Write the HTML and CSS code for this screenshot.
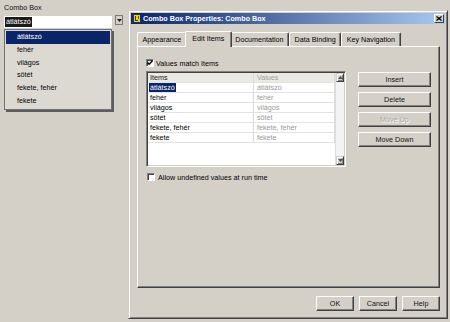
FILE: index.html
```html
<!DOCTYPE html>
<html>
<head>
<meta charset="utf-8">
<link rel="stylesheet" href="styles.css">
</head>
<body>
<div class="desk">
  <div class="left">
    <div class="lbl">Combo Box</div>
    <div class="combo">
      <div class="field"><span class="hl">átlátszó</span></div>
      <div class="dropbtn"><svg width="5" height="3" viewBox="0 0 5 3"><path d="M0 0h5L2.5 3z" fill="#222"/></svg></div>
    </div>
    <ul class="list">
      <li class="on">átlátszó</li>
      <li>fehér</li>
      <li>világos</li>
      <li>sötét</li>
      <li>fekete, fehér</li>
      <li>fekete</li>
    </ul>
  </div>

  <div class="dlg">
    <div class="title">
      <svg class="ticon" width="9" height="9" viewBox="0 0 9 9"><rect width="9" height="9" fill="#1d2f6e"/><rect x="2" y="1" width="6" height="7" fill="#f0d200"/><path d="M3 2h1v4h2v1H3z" fill="#3a3000"/><path d="M6 2h1v3H6z" fill="#6b5a00"/></svg>
      <span class="ttext">Combo Box Properties: Combo Box</span>
      <div class="tclose"><svg width="6" height="5" viewBox="0 0 6 5"><path d="M0.5 0.5L5.5 4.5M5.5 0.5L0.5 4.5" stroke="#000" stroke-width="1.3"/></svg></div>
    </div>
    <div class="dbody">
      <div class="tabs">
        <div class="tab">Appearance</div>
        <div class="tab on">Edit Items</div>
        <div class="tab">Documentation</div>
        <div class="tab">Data Binding</div>
        <div class="tab">Key Navigation</div>
      </div>
      <div class="panel">
        <div class="chkrow">
          <div class="cb"><svg width="6" height="6" viewBox="0 0 6 6"><path d="M0.5 2.5L2.2 4.3L5.5 0.8" stroke="#000" stroke-width="1.3" fill="none"/></svg></div>
          <span>Values match Items</span>
        </div>
        <div class="main">
          <div class="tbl">
            <div class="grid">
              <div class="c h">Items</div><div class="c h v">Values</div>
              <div class="c"><span class="sel">átlátszó</span></div><div class="c v">átlátszó</div>
              <div class="c">fehér</div><div class="c v">fehér</div>
              <div class="c">világos</div><div class="c v">világos</div>
              <div class="c">sötét</div><div class="c v">sötét</div>
              <div class="c">fekete, fehér</div><div class="c v">fekete, fehér</div>
              <div class="c">fekete</div><div class="c v">fekete</div>
            </div>
            <div class="sb">
              <div class="sbb"><svg width="5" height="3" viewBox="0 0 5 3"><path d="M0 3h5L2.5 0z" fill="#555"/></svg></div>
              <div class="sbt"></div>
              <div class="sbb"><svg width="5" height="3" viewBox="0 0 5 3"><path d="M0 0h5L2.5 3z" fill="#555"/></svg></div>
            </div>
          </div>
          <div class="btns">
            <div class="btn">Insert</div>
            <div class="btn">Delete</div>
            <div class="btn dis">Move Up</div>
            <div class="btn">Move Down</div>
          </div>
        </div>
        <div class="chkrow allow">
          <div class="cb"></div>
          <span>Allow undefined values at run time</span>
        </div>
      </div>
      <div class="foot">
        <div class="btn fb">OK</div>
        <div class="btn fb">Cancel</div>
        <div class="btn fb">Help</div>
      </div>
    </div>
  </div>
</div>
</body>
</html>
```

FILE: styles.css
```css
* { box-sizing: border-box; }
body {
  margin: 0;
  width: 450px;
  height: 322px;
  overflow: hidden;
  background: #d4d0c8;
  font-family: "Liberation Sans", Arial, sans-serif;
  font-size: 7.2px;
  color: #000;
}
.desk { display: flex; align-items: flex-start; height: 322px; }

.left { position: relative; width: 124px; padding: 2px 0 0 4px; }
.lbl { height: 12px; line-height: 12px; color: #111; }
.combo { display: flex; align-items: flex-start; margin-top: 2px; }
.field { width: 108px; height: 12px; background: #fff; padding: 1px 0 0 1px; }
.field .hl {
  display: inline-block; background: #1a1a1a; color: #fff;
  height: 10px; line-height: 10px; padding: 0 1px;
}
.dropbtn {
  width: 8px; height: 10px; margin: -1px 0 0 3px;
  background: #d4d0c8; border: 1px solid #7a7a7a;
  display: flex; align-items: center; justify-content: center;
}
.list {
  position: absolute; left: 4px; top: 29px; width: 108px;
  margin: 0; padding: 1px; list-style: none;
  background: #dcd9d3; border: 1px solid #707070;
  box-shadow: 2px 2px 0 #5d5d5d;
}
.list li { height: 12.8px; line-height: 12.8px; padding-left: 11px; color: #000; }
.list li.on { background: #0a246a; color: #fff; }

.dlg {
  margin: 10px 0 0 4px; width: 320px; height: 309px;
  border: 1px solid; border-color: #d4d0c8 #404040 #404040 #d4d0c8;
  box-shadow: inset 1px 1px #fff, inset -1px -1px #808080;
  padding: 2px; display: flex; flex-direction: column;
}
.title {
  height: 11px; display: flex; align-items: center;
  background: linear-gradient(90deg, #0a246a, #a6caf0);
  color: #fff; font-weight: bold; padding-left: 1px;
}
.ticon { margin-right: 2px; flex: none; }
.tclose {
  margin-left: auto; margin-right: 1px; width: 10px; height: 9px;
  background: #d4d0c8; border: 1px solid; border-color: #fff #404040 #404040 #fff;
  display: flex; align-items: center; justify-content: center;
}
.dbody { flex: 1; padding: 8px 5px 0 6px; display: flex; flex-direction: column; }

.tabs { display: flex; height: 14px; align-items: flex-end; }
.tab {
  height: 14px; padding: 0 4.5px; line-height: 13px; white-space: nowrap;
  border-top: 1px solid #fff; border-left: 1px solid #fff; border-right: 1px solid #404040;
  box-shadow: inset -1px 0 #808080; border-radius: 2px 2px 0 0;
}
.tab.on {
  height: 16px; margin: 0 -2px -1px; padding: 0 6.5px; line-height: 14px;
  position: relative; z-index: 1; background: #d4d0c8;
}
.panel {
  height: 242px; border: 1px solid; border-color: #fff #404040 #404040 #fff;
  box-shadow: inset -1px -1px #808080; padding: 12px 8px 0 8px;
}
.chkrow { display: flex; align-items: center; height: 8px; gap: 2px; }
.cb {
  width: 8px; height: 8px; background: #fff; flex: none;
  border: 1px solid; border-color: #808080 #fff #fff #808080;
  box-shadow: inset 1px 1px #404040;
  display: flex; align-items: center; justify-content: center;
}
.main { display: flex; align-items: flex-start; margin-top: 4px; }
.tbl {
  width: 202px; height: 96px; display: flex; padding: 1px;
  border: 1px solid; border-color: #808080 #fff #fff #808080;
  box-shadow: inset 1px 1px #404040;
}
.grid {
  flex: 1; background: #fff; display: grid;
  grid-template-columns: 106px 1fr; grid-auto-rows: 10px; align-content: start;
}
.c {
  border-bottom: 1px solid #e3e3e3; border-right: 1px solid #dadada;
  line-height: 9px; padding-left: 2px; white-space: nowrap; overflow: hidden;
}
.c.v { color: #9a9a9a; padding-left: 3px; }
.c.h { background: #ebe9e4; color: #111; }
.c.h.v { color: #a0a0a0; }
.sel { background: #0a246a; color: #fff; padding: 0 1px; margin-left: -1px; }
.sb { width: 9px; display: flex; flex-direction: column; background: #f4f3f1; border-left: 1px solid #e0ded9; }
.sbb {
  height: 9px; background: #d4d0c8;
  border: 1px solid; border-color: #d4d0c8 #404040 #404040 #d4d0c8;
  box-shadow: inset 1px 1px #fff, inset -1px -1px #808080;
  display: flex; align-items: center; justify-content: center;
}
.sbt { flex: 1; }

.btns { margin-left: 12px; display: flex; flex-direction: column; gap: 5px; padding-top: 1px; }
.btn {
  width: 73px; height: 15px; background: #d4d0c8;
  border: 1px solid; border-color: #fff #404040 #404040 #fff;
  box-shadow: inset -1px -1px #808080;
  display: flex; align-items: center; justify-content: center; color: #111;
}
.btn.dis { color: #a8a5a0; text-shadow: 1px 1px 0 #fff; }
.allow { margin-top: 6px; margin-left: 1px; gap: 3px; }
.foot { display: flex; justify-content: flex-end; gap: 5px; margin-top: 8px; }
.btn.fb { width: 38px; }
```
